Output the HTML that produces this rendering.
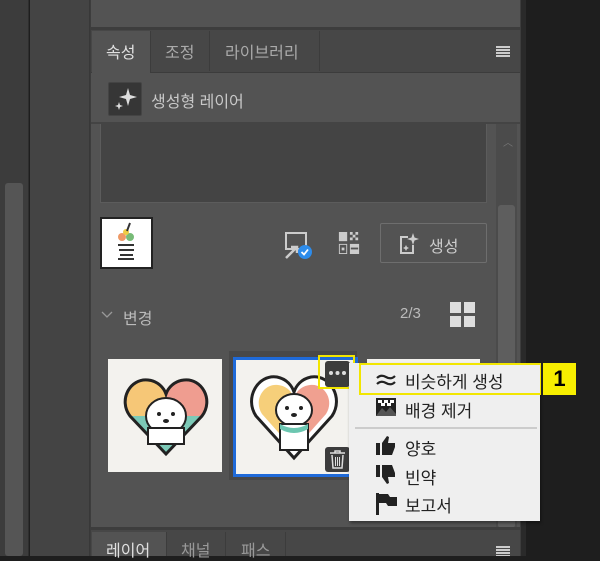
<!DOCTYPE html>
<html><head><meta charset="utf-8"><style>
*{margin:0;padding:0;box-sizing:border-box}
body{width:600px;height:556px;overflow:hidden;background:#1e1e1e;position:relative;font-family:"Liberation Sans","Noto Sans CJK KR",sans-serif;color:#d4d4d4}
.a{position:absolute}
.menu div{position:absolute;left:56px;font-size:17px;color:#222}
</style></head><body>
<div class="a" style="left:0;top:0;width:29px;height:556px;background:#3c3c3c;border-right:1px solid #2e2e2e"></div>
<div class="a" style="left:5px;top:183px;width:18px;height:373px;background:#555;border-radius:3px"></div>
<div class="a" style="left:30px;top:0;width:60px;height:556px;background:#444;border-right:1px solid #383838"></div>
<div class="a" style="left:90px;top:0;width:431px;height:556px;background:#535353;border-left:1px solid #3d3d3d;border-right:1px solid #3d3d3d"></div>
<div class="a" style="left:521px;top:0;width:5px;height:556px;background:#2a2a2a"></div>
<div class="a" style="left:90px;top:27px;width:431px;height:3px;background:#3d3d3d"></div>
<!-- tab bar -->
<div class="a" style="left:91px;top:30px;width:429px;height:43px;background:#474747;border-bottom:1px solid #3c3c3c"></div>
<div class="a" style="left:92px;top:31px;width:59px;height:42px;background:#535353;border-right:1px solid #3c3c3c"></div>
<div class="a" style="left:151px;top:31px;width:59px;height:40px;border-right:1px solid #3c3c3c"></div>
<div class="a" style="left:210px;top:31px;width:110px;height:40px;border-right:1px solid #3c3c3c"></div>
<div class="a" style="left:106px;top:39px;font-size:16px;color:#e0e0e0">속성</div>
<div class="a" style="left:165px;top:39px;font-size:16px;color:#aaa">조정</div>
<div class="a" style="left:225px;top:39px;font-size:16px;color:#aaa">라이브러리</div>
<div class="a" style="left:496px;top:46px;width:14px;height:12px;background:repeating-linear-gradient(#ccc 0 2px,transparent 2px 3px)"></div>
<!-- header -->
<div class="a" style="left:108px;top:82px;width:34px;height:34px;background:#363636;border:1px solid #444;border-radius:2px"></div>
<svg class="a" style="left:112px;top:86px" width="26" height="26" viewBox="0 0 26 26"><path d="M16 2 L18 9 L25 11 L18 13 L16 20 L14 13 L7 11 L14 9Z" fill="#ddd"/><path d="M7 16 L8 19 L11 20 L8 21 L7 24 L6 21 L3 20 L6 19Z" fill="#ddd"/></svg>
<div class="a" style="left:151px;top:88px;font-size:16px;color:#c8c8c8">생성형 레이어</div>
<div class="a" style="left:91px;top:122px;width:429px;height:2px;background:#444"></div>
<!-- text area -->
<div class="a" style="left:100px;top:124px;width:387px;height:79px;background:#444;border:1px solid #5c5c5c;border-top:none"></div>
<div class="a" style="left:496px;top:124px;width:21px;height:404px;background:#4b4b4b"></div>
<div class="a" style="left:503px;top:134px;font-size:10px;color:#777">︿</div>
<div class="a" style="left:498px;top:205px;width:17px;height:323px;background:#5e5e5e;border-radius:3px"></div>
<!-- thumb row -->
<div class="a" style="left:100px;top:217px;width:53px;height:52px;background:#fff;border:2px solid #222"></div>
<svg class="a" style="left:112px;top:221px" width="28" height="44" viewBox="0 0 28 44"><circle cx="10" cy="16" r="4" fill="#e96"/><circle cx="18" cy="16" r="4" fill="#7b7"/><circle cx="14" cy="11" r="3" fill="#ec4"/><path d="M18 2 L15 10" stroke="#333" stroke-width="2"/><path d="M6 24 h16 M7 29 h15 M8 34 h13 M6 38 h16" stroke="#333" stroke-width="2"/></svg>
<svg class="a" style="left:283px;top:230px" width="30" height="30" viewBox="0 0 30 30"><rect x="3" y="3" width="20" height="16" fill="none" stroke="#ccc" stroke-width="2"/><path d="M3 28 L14 17 M8 17 h6 v6" stroke="#ccc" stroke-width="2.5" fill="none"/><circle cx="22" cy="22" r="7" fill="#2d8ceb"/><path d="M18.5 22 l2.5 2.5 l4 -5" stroke="#fff" stroke-width="1.8" fill="none"/></svg>
<svg class="a" style="left:338px;top:232px" width="22" height="22" viewBox="0 0 22 24"><rect x="0" y="0" width="9" height="10" fill="#ccc"/><path d="M12 0h3v3h-3zM18 0h3v3h-3zM15 3h3v3h-3zM12 6h3v3h-3zM18 6h3v3h-3z" fill="#ccc"/><rect x="0.5" y="13.5" width="8" height="10" fill="none" stroke="#ccc"/><rect x="3" y="17" width="3" height="3" fill="#ccc"/><rect x="12" y="13" width="10" height="11" fill="#ccc"/><rect x="13" y="17" width="8" height="2" fill="#535353"/></svg>
<div class="a" style="left:380px;top:223px;width:107px;height:40px;border:1px solid #6e6e6e;border-radius:2px"></div>
<svg class="a" style="left:398px;top:232px" width="22" height="24" viewBox="0 0 22 24"><path d="M10 5 H3 V21 H15 V13" fill="none" stroke="#ccc" stroke-width="2"/><path d="M15 1 L16.5 5.5 L21 7 L16.5 8.5 L15 13 L13.5 8.5 L9 7 L13.5 5.5Z" fill="#ccc"/><path d="M8 13 l1 2 2 1 -2 1 -1 2 -1-2 -2-1 2-1z" fill="#ccc"/></svg>
<div class="a" style="left:429px;top:233px;font-size:16px;color:#ccc">생성</div>
<!-- 변경 -->
<svg class="a" style="left:101px;top:311px" width="12" height="8"><path d="M1 1 L6 6 L11 1" stroke="#999" stroke-width="1.3" fill="none"/></svg>
<div class="a" style="left:123px;top:305px;font-size:16px;color:#bbb">변경</div>
<div class="a" style="left:400px;top:305px;font-size:15px;color:#bbb">2/3</div>
<div class="a" style="left:450px;top:302px;width:11px;height:11px;background:#ddd"></div>
<div class="a" style="left:464px;top:302px;width:11px;height:11px;background:#ddd"></div>
<div class="a" style="left:450px;top:316px;width:11px;height:11px;background:#ddd"></div>
<div class="a" style="left:464px;top:316px;width:11px;height:11px;background:#ddd"></div>
<!-- thumbs -->
<div class="a" style="left:108px;top:359px;width:114px;height:113px;background:#f3f2ee"></div>
<svg class="a" style="left:122px;top:372px" width="88" height="90" viewBox="0 0 88 90"><path d="M44 82 L8 44 C-4 28 8 6 26 8 C36 9 42 16 44 22 C46 16 52 9 62 8 C80 6 92 28 80 44Z" fill="#f6c777"/><path d="M44 22 C46 16 52 9 62 8 C80 6 92 28 80 44 L44 44Z" fill="#ef9d90"/><path d="M8 44 L80 44 L44 82Z" fill="#7cc9b7"/><path d="M44 82 L8 44 C-4 28 8 6 26 8 C36 9 42 16 44 22 C46 16 52 9 62 8 C80 6 92 28 80 44Z" fill="none" stroke="#222" stroke-width="3"/><ellipse cx="44" cy="44" rx="20" ry="18" fill="#fff" stroke="#222" stroke-width="2"/><rect x="26" y="56" width="36" height="16" fill="#fff" stroke="#222" stroke-width="2"/><circle cx="37" cy="42" r="2" fill="#222"/><circle cx="51" cy="42" r="2" fill="#222"/><ellipse cx="44" cy="49" rx="3" ry="2" fill="#222"/></svg>
<div class="a" style="left:229px;top:351px;width:128px;height:129px;background:#484848"></div>
<div class="a" style="left:233px;top:357px;width:125px;height:120px;background:#f3f2ee;border:3px solid #1f6ad8"></div>
<svg class="a" style="left:250px;top:372px" width="88" height="92" viewBox="0 0 88 92"><path d="M44 86 L6 44 C-6 26 8 2 27 5 C37 7 42 14 44 20 C46 14 51 7 61 5 C80 2 94 26 82 44Z" fill="#fff" stroke="#222" stroke-width="3"/><path d="M44 78 L12 42 C3 28 14 11 28 13 C37 14 42 20 44 26 L44 78Z" fill="#f6cf7a"/><path d="M44 78 L76 42 C85 28 74 11 60 13 C51 14 46 20 44 26Z" fill="#f0a090"/><ellipse cx="44" cy="38" rx="18" ry="16" fill="#fff" stroke="#222" stroke-width="2"/><path d="M30 52 h28 v26 h-28z" fill="#fff" stroke="#222" stroke-width="2"/><path d="M30 52 q14 8 28 0 v5 q-14 8 -28 0z" fill="#6cc6b0"/><circle cx="37" cy="36" r="2" fill="#222"/><circle cx="51" cy="36" r="2" fill="#222"/><ellipse cx="44" cy="43" rx="3" ry="2" fill="#222"/></svg>
<div class="a" style="left:367px;top:359px;width:113px;height:10px;background:#f3f2ee"></div>
<div class="a" style="left:325px;top:361px;width:25px;height:26px;background:#3c3c3c;border-radius:3px"></div>
<svg class="a" style="left:327px;top:370px" width="21" height="6"><circle cx="4" cy="3" r="2" fill="#ddd"/><circle cx="10.5" cy="3" r="2" fill="#ddd"/><circle cx="17" cy="3" r="2" fill="#ddd"/></svg>
<div class="a" style="left:318px;top:355px;width:37px;height:34px;border:2px solid #f2e600"></div>
<div class="a" style="left:325px;top:447px;width:25px;height:25px;background:#3c3c3c;border-radius:3px"></div>
<svg class="a" style="left:329px;top:450px" width="17" height="19" viewBox="0 0 17 19"><path d="M1 3h15M6 3V1h5v2M3 5l1 13h9l1-13" fill="none" stroke="#ddd" stroke-width="1.5"/><path d="M6.5 7v9M8.5 7v9M10.5 7v9" stroke="#ddd"/></svg>
<!-- menu -->
<div class="a menu" style="left:349px;top:363px;width:191px;height:158px;background:#efefef;box-shadow:1px 2px 3px rgba(0,0,0,.4)">
<div style="top:5px">비슷하게 생성</div>
<div style="top:34px">배경 제거</div>
<div style="left:6px;top:64px;width:182px;height:2px;background:#ccc"></div>
<div style="top:72px">양호</div>
<div style="top:101px">빈약</div>
<div style="top:129px">보고서</div>
<svg style="position:absolute;left:27px;top:10px" width="20" height="14" viewBox="0 0 20 14"><path d="M1 5 Q5 1 10 4 T19 3 M1 11 Q5 7 10 10 T19 9" fill="none" stroke="#222" stroke-width="2.2"/></svg>
<svg style="position:absolute;left:27px;top:35px" width="20" height="18"><rect width="20" height="18" fill="#222"/><path d="M2 2h4v3h-4zM8 2h4v3h-4zM14 2h4v3h-4zM5 5h4v3h-4zM11 5h4v3h-4z" fill="#fff"/><path d="M0 18 L6 10 L10 14 L14 9 L20 16 V18Z" fill="#555"/></svg>
<svg style="position:absolute;left:27px;top:72px" width="20" height="20" viewBox="0 0 20 20"><rect x="0" y="8" width="4" height="12" fill="#222"/><path d="M6 8 L11 1 L13 2 L12 8 H19 V12 L16 20 H6Z" fill="#222"/></svg>
<svg style="position:absolute;left:27px;top:102px" width="20" height="20" viewBox="0 0 20 20"><rect x="0" y="0" width="4" height="12" fill="#222"/><path d="M6 12 L11 19 L13 18 L12 12 H19 V8 L16 0 H6Z" fill="#222"/></svg>
<svg style="position:absolute;left:27px;top:130px" width="22" height="22" viewBox="0 0 22 22"><rect x="0" y="0" width="3" height="22" fill="#222"/><path d="M3 1 H12 L14 4 H21 V13 H12 L10 10 H3Z" fill="#222"/></svg>
</div>
<div class="a" style="left:359px;top:363px;width:183px;height:32px;border:2px solid #f2e600"></div>
<div class="a" style="left:541px;top:363px;width:35px;height:32px;background:#f7ee00;border-left:2px solid #222;font-size:22px;font-weight:bold;color:#000;text-align:center;line-height:32px">1</div>
<!-- bottom -->
<div class="a" style="left:91px;top:527px;width:429px;height:3px;background:#3d3d3d"></div>
<div class="a" style="left:91px;top:530px;width:429px;height:26px;background:#474747"></div>
<div class="a" style="left:92px;top:532px;width:75px;height:24px;background:#535353;border-right:1px solid #3c3c3c"></div>
<div class="a" style="left:167px;top:532px;width:59px;height:24px;border-right:1px solid #3c3c3c"></div>
<div class="a" style="left:226px;top:532px;width:60px;height:24px;border-right:1px solid #3c3c3c"></div>
<div class="a" style="left:106px;top:537px;font-size:16px;color:#e0e0e0">레이어</div>
<div class="a" style="left:181px;top:537px;font-size:16px;color:#999">채널</div>
<div class="a" style="left:241px;top:537px;font-size:16px;color:#999">패스</div>
<div class="a" style="left:496px;top:546px;width:14px;height:10px;background:repeating-linear-gradient(#ccc 0 2px,transparent 2px 3px)"></div>
</body></html>
